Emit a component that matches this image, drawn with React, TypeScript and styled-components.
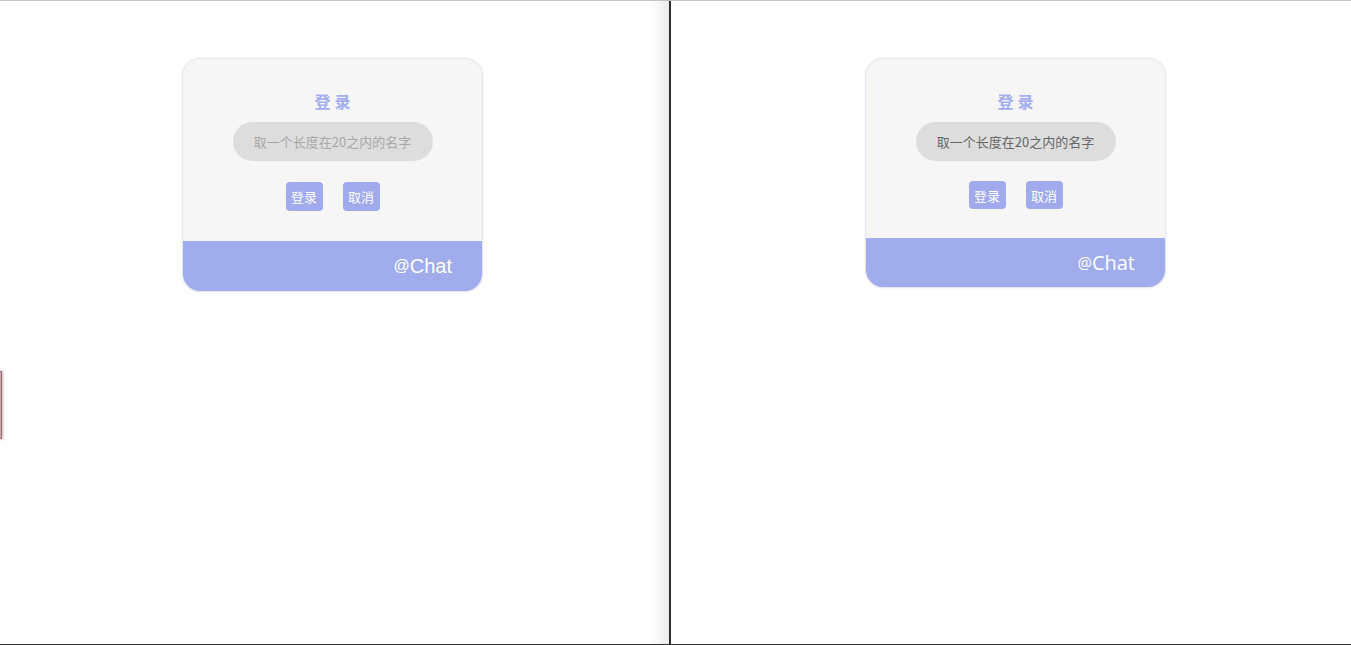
import React from 'react'
import styled, { createGlobalStyle } from 'styled-components'

const GlobalStyle = createGlobalStyle`
  html, body {
    margin: 0;
    padding: 0;
    background: #ffffff;
  }
  body {
    font-family: "Liberation Sans", "Noto Sans CJK SC", sans-serif;
    overflow: hidden;
  }
`

type Variant = 'left' | 'right'

const Screen = styled.div`
  width: 1351px;
  height: 645px;
  display: flex;
  box-sizing: border-box;
  border-top: 1px solid #c4c4c4;
  border-bottom: 1px solid #303030;
  position: relative;
  overflow: hidden;
`

const Pane = styled.div<{ $width: number; $offset: number }>`
  width: ${(p) => p.$width}px;
  flex: none;
  position: relative;
  padding-left: ${(p) => p.$offset}px;
  padding-top: 57px;
  box-sizing: border-box;
`

const Divider = styled.div`
  width: 2px;
  flex: none;
  background: #2e2e2e;
  position: relative;
  &::before {
    content: '';
    position: absolute;
    right: 2px;
    top: 0;
    bottom: 0;
    width: 18px;
    background: linear-gradient(to right, rgba(236, 236, 236, 0), rgba(232, 232, 232, 0.85));
  }
`

const EdgeTab = styled.div`
  position: absolute;
  left: -8px;
  top: 370px;
  width: 8px;
  height: 66px;
  border: 1px solid #9a6f74;
  background: #c9a9ad;
  box-shadow: 1px 0 3px rgba(120, 60, 70, 0.4);
`

const Card = styled.div<{ $variant: Variant }>`
  width: 301px;
  box-sizing: border-box;
  background: #f6f6f6;
  border: 1px solid #e6e6f2;
  border-radius: 18px;
  overflow: hidden;
  display: flex;
  flex-direction: column;
  align-items: center;
  box-shadow: 0 0 2px rgba(190, 190, 220, 0.35);
`

const Title = styled.div`
  margin-top: 32px;
  font-family: "Noto Sans CJK SC", sans-serif;
  font-size: 16px;
  font-weight: 700;
  letter-spacing: 4px;
  padding-left: 4px;
  color: #a2aeef;
  line-height: 20px;
`

const NameInput = styled.input<{ $variant: Variant }>`
  margin-top: 11px;
  width: 200px;
  height: 39px;
  box-sizing: border-box;
  border: none;
  outline: none;
  border-radius: 20px;
  background: #dddddd;
  text-align: center;
  font-family: "Noto Sans CJK SC", sans-serif;
  font-size: 13px;
  color: #666666;
  padding: 0;
  &::placeholder {
    color: #a8a8a8;
  }
`

const ButtonRow = styled.div<{ $variant: Variant }>`
  display: flex;
  gap: 20px;
  margin-top: ${(p) => (p.$variant === 'left' ? 21 : 20)}px;
  margin-bottom: ${(p) => (p.$variant === 'left' ? 30 : 29)}px;
`

const SmallButton = styled.button<{ $variant: Variant }>`
  width: 37px;
  height: ${(p) => (p.$variant === 'left' ? 29 : 28)}px;
  border: none;
  border-radius: 4px;
  background: #a0aaed;
  color: #ffffff;
  font-family: "Noto Sans CJK SC", sans-serif;
  font-size: 13px;
  padding: 0;
  cursor: pointer;
`

const Footer = styled.div<{ $variant: Variant }>`
  align-self: stretch;
  height: ${(p) => (p.$variant === 'left' ? 50 : 49)}px;
  background: #a0acec;
  display: flex;
  align-items: center;
  justify-content: flex-end;
  padding-right: 30px;
  color: #ffffff;
  font-family: ${(p) => (p.$variant === 'left' ? '"Liberation Sans"' : '"Open Sans"')}, sans-serif;
  font-size: 20px;
`

const At = styled.span`
  font-size: 16px;
`

const LoginCard = ({ variant, value }: { variant: Variant; value?: string }) => (
  <Card $variant={variant}>
    <Title>登录</Title>
    <NameInput
      $variant={variant}
      placeholder='取一个长度在20之内的名字'
      defaultValue={value}
    />
    <ButtonRow $variant={variant}>
      <SmallButton $variant={variant}>登录</SmallButton>
      <SmallButton $variant={variant}>取消</SmallButton>
    </ButtonRow>
    <Footer $variant={variant}>
      <At>@</At>Chat
    </Footer>
  </Card>
)

const App = () => {
  return (
    <>
      <GlobalStyle />
      <Screen>
        <Pane $width={669} $offset={182}>
          <EdgeTab />
          <LoginCard variant='left' />
        </Pane>
        <Divider />
        <Pane $width={680} $offset={194}>
          <LoginCard variant='right' value='取一个长度在20之内的名字' />
        </Pane>
      </Screen>
    </>
  )
}

export default App
